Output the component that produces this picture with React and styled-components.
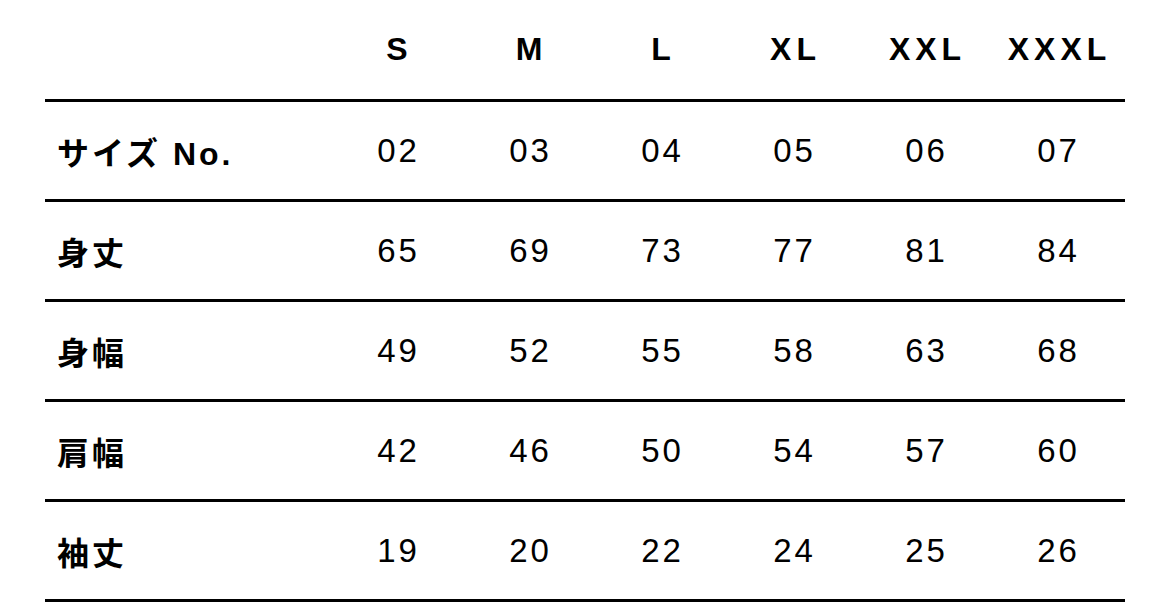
import React from "react";
import styled, { createGlobalStyle } from "styled-components";

const Global = createGlobalStyle`
  html, body { margin: 0; padding: 0; background: #fff; }
  body { font-family: "Liberation Sans", "Noto Sans CJK JP", sans-serif; color: #000; }
`;

const Wrap = styled.div`
  padding: 0 45px;
  width: 1080px;
`;

const Row = styled.div`
  display: grid;
  grid-template-columns: 286px repeat(6, 132px);
  align-items: center;
  height: ${(p) => (p.$head ? "99px" : "97px")};
  border-bottom: 3px solid #000;
`;

const Label = styled.div`
  padding-left: 12px;
  font-family: "Liberation Sans", "Noto Sans CJK JP", sans-serif;
  font-weight: 700;
  font-size: 32px;
  letter-spacing: 3px;
`;

const HeadCell = styled.div`
  text-align: center;
  font-weight: 700;
  font-size: 32px;
  letter-spacing: 5px;
  padding-left: 5px;
`;

const Cell = styled.div`
  text-align: center;
  font-weight: 400;
  font-size: 33px;
  letter-spacing: 3px;
  padding-left: 3px;
`;

const sizes = ["S", "M", "L", "XL", "XXL", "XXXL"];
const rows = [
  ["サイズ No.", ["02", "03", "04", "05", "06", "07"]],
  ["身丈", ["65", "69", "73", "77", "81", "84"]],
  ["身幅", ["49", "52", "55", "58", "63", "68"]],
  ["肩幅", ["42", "46", "50", "54", "57", "60"]],
  ["袖丈", ["19", "20", "22", "24", "25", "26"]],
];

export default function App() {
  return (
    <>
      <Global />
      <Wrap>
        <Row $head>
          <div />
          {sizes.map((s) => (
            <HeadCell key={s}>{s}</HeadCell>
          ))}
        </Row>
        {rows.map(([label, vals]) => (
          <Row key={label}>
            <Label>{label}</Label>
            {vals.map((v, i) => (
              <Cell key={i}>{v}</Cell>
            ))}
          </Row>
        ))}
      </Wrap>
    </>
  );
}
